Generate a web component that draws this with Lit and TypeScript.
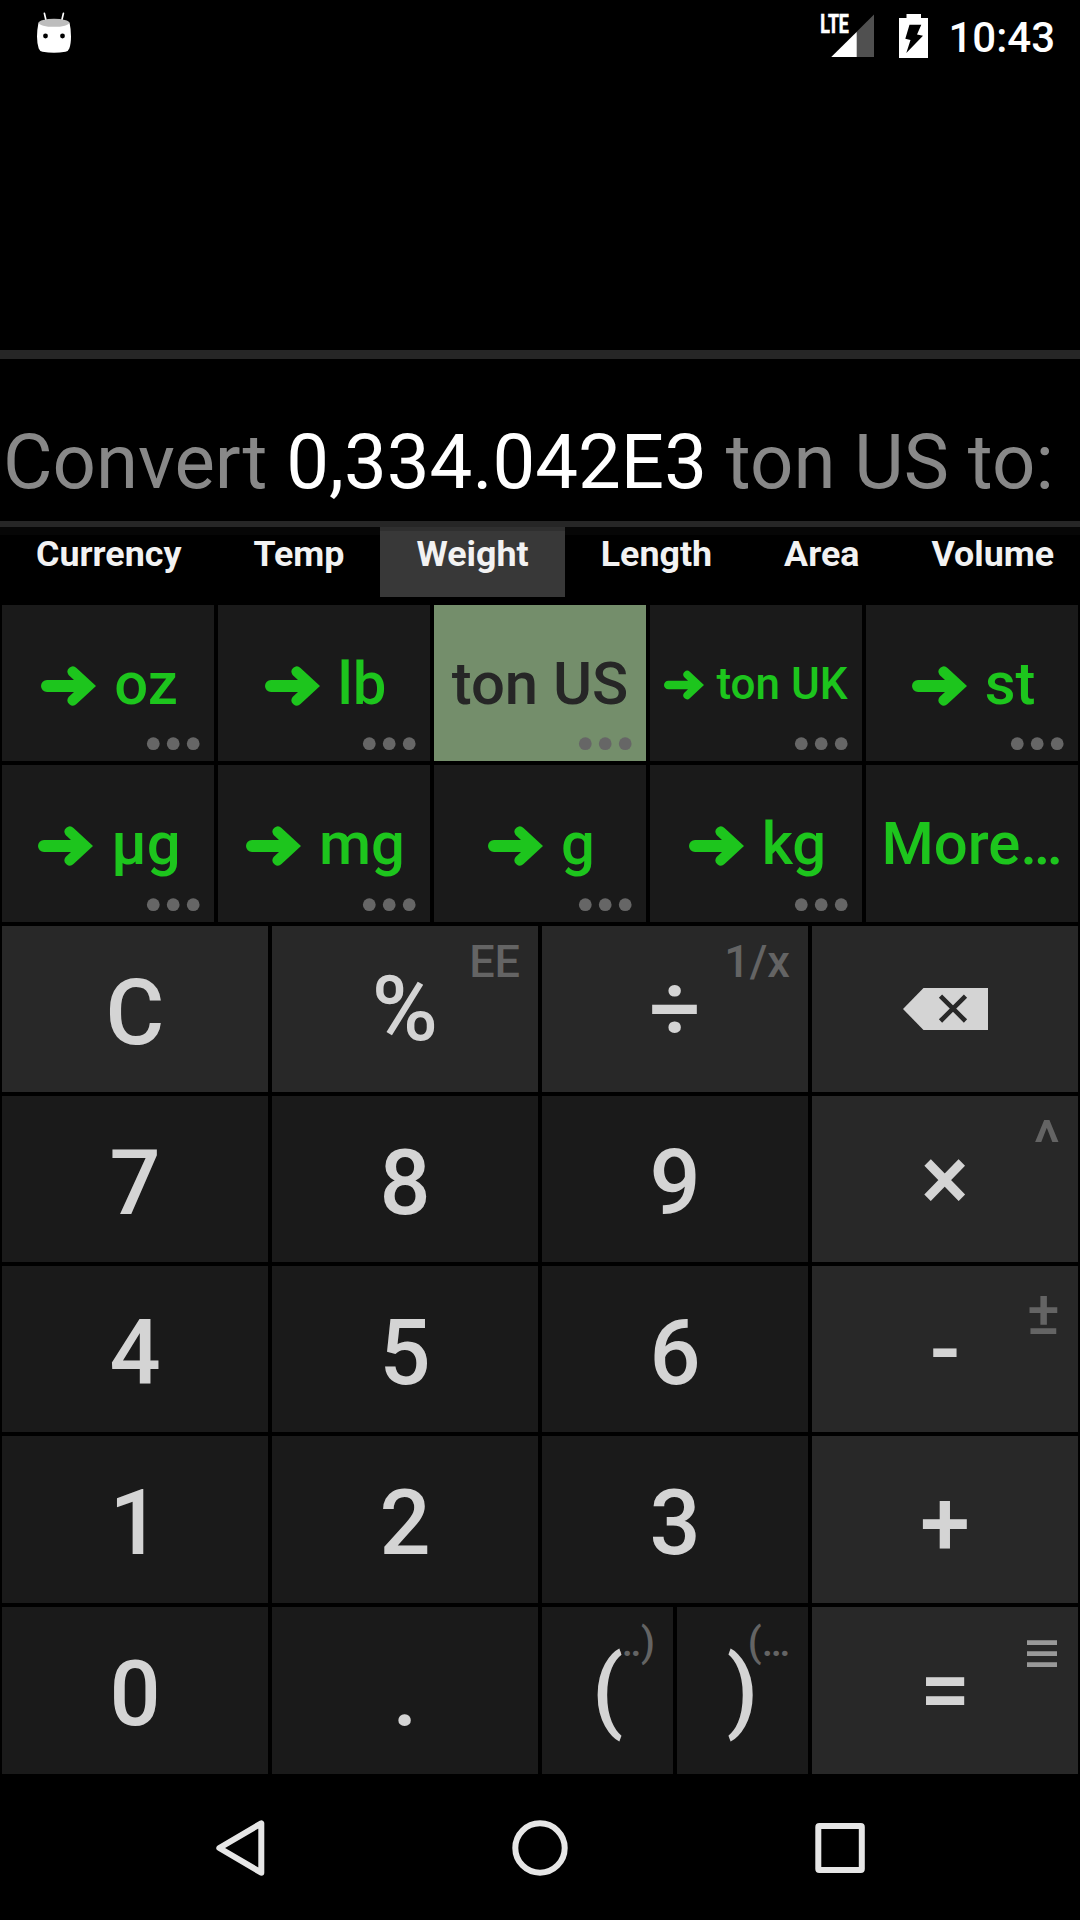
import { LitElement, html, css, nothing, TemplateResult } from "lit";
import { customElement } from "lit/decorators.js";
import { classMap } from "lit/directives/class-map.js";

interface Unit {
  name: string;
  arrow?: boolean;
  small?: boolean;
  selected?: boolean;
  menu?: boolean;
}

interface Key {
  label: string | TemplateResult;
  kind?: string;
  op?: boolean;
  hint?: string | TemplateResult;
  hintKind?: string;
}

const backspaceIcon = html`<svg class="backspace" width="85" height="42" viewBox="0 0 85 42">
  <path fill="#d4d4d4" d="M0 21 20.5 0H85V42H20.5Z" />
  <path stroke="#282828" stroke-width="4.6" d="M37.5 8.2 62.5 33M62.5 8.2 37.5 33" />
</svg>`;

const menuIcon = html`<svg width="30" height="28" viewBox="0 0 30 28">
  <path fill="#999" d="M0 0.3H30V5H0ZM0 11.3H30V16H0ZM0 22.3H30V27H0Z" />
</svg>`;

const UNITS: Unit[] = [
  { name: "oz", arrow: true, menu: true },
  { name: "lb", arrow: true, menu: true },
  { name: "ton US", selected: true, menu: true },
  { name: "ton UK", arrow: true, small: true, menu: true },
  { name: "st", arrow: true, menu: true },
  { name: "µg", arrow: true, menu: true },
  { name: "mg", arrow: true, menu: true },
  { name: "g", arrow: true, menu: true },
  { name: "kg", arrow: true, menu: true },
  { name: "More…" },
];

const KEYS: Key[] = [
  { label: "C", op: true },
  { label: "%", op: true, kind: "raised", hint: "EE" },
  { label: "÷", op: true, kind: "raised", hint: "1/x" },
  { label: backspaceIcon, op: true, kind: "icon" },
  { label: "7" },
  { label: "8" },
  { label: "9" },
  { label: "×", op: true, kind: "raised", hint: "^", hintKind: "large" },
  { label: "4" },
  { label: "5" },
  { label: "6" },
  { label: "-", op: true, kind: "raised", hint: "±", hintKind: "large" },
  { label: "1" },
  { label: "2" },
  { label: "3" },
  { label: "+", op: true, kind: "lowered" },
  { label: "0" },
  { label: "." },
  { label: "(", kind: "raised", hint: "…)", hintKind: "tail" },
  { label: ")", kind: "raised", hint: "(…", hintKind: "tail" },
  { label: "=", op: true, kind: "raised", hint: menuIcon, hintKind: "menu" },
];

@customElement("status-bar")
class StatusBar extends LitElement {
  static styles = css`
    :host {
      display: flex;
      flex: none;
      justify-content: space-between;
      height: 72px;
      color: #fff;
    }
    svg {
      display: block;
    }
    .right {
      display: flex;
      padding-right: 25px;
    }
    .signal {
      margin-right: -2px;
    }
    .time {
      font-size: 42px;
      font-weight: 500;
      line-height: 50px;
      padding-top: 13px;
    }
  `;
  render() {
    return html`
      <svg width="110" height="72" viewBox="0 0 110 72">
        <path stroke="#fff" stroke-width="1.7" stroke-linecap="round" d="M44.4 13.4 46.4 22M63.4 13.4 61.4 22" />
        <path fill="#fff" d="M38.5 22.5H69.5Q71 29 71 36.500T69.300 48.500Q68.500 51 65.500 51.700 54 54 42.500 51.700 39.500 51 38.700 48.500 37 43 37 36.500T38.500 22.500Z" />
        <ellipse cx="54" cy="22.800" rx="15.300" ry="4" fill="#bdbdbd" />
        <circle cx="45.500" cy="36" r="2.400" />
        <circle cx="62.500" cy="36" r="2.400" />
      </svg>
      <div class="right">
        <svg class="signal" width="135" height="72" viewBox="815 0 135 72">
          <path fill="#505050" d="M874 14.500V57H831.300Z" />
          <path fill="#fff" d="M856.700 32V57H831.300Z" />
          <text x="820.300" y="33.300" font-size="25.200" font-weight="700" textLength="28.500" lengthAdjust="spacingAndGlyphs" fill="#fff" stroke="#fff" stroke-width="0.700">LTE</text>
          <path fill="#fff" d="M906.500 14H921V18H928V58H899V18H906.500Z" />
          <path d="M909.500 24.700H921.300L917 34.500 923 35.700 906.300 53 910.500 40 905.300 38.700Z" />
        </svg>
        <div class="time">10:43</div>
      </div>
    `;
  }
}

@customElement("unit-button")
class UnitButton extends LitElement {
  static properties = { unit: { attribute: false } };
  declare unit: Unit;
  static styles = css`
    :host {
      display: block;
    }
    .cell {
      position: relative;
      display: flex;
      align-items: flex-start;
      justify-content: center;
      gap: 18px;
      box-sizing: border-box;
      height: 100%;
      padding-top: 43px;
      background: #1a1a1a;
      color: #1dc51d;
      font-size: 59.8px;
      font-weight: 500;
      line-height: 72px;
      white-space: nowrap;
    }
    .selected {
      background: #748e6b;
      color: #262626;
    }
    .linked {
      padding-left: 3px;
    }
    .arrow {
      display: block;
      width: 55px;
      height: 40px;
      margin-top: 18px;
    }
    .small {
      font-size: 44px;
      gap: 12px;
      padding-left: 0;
    }
    .small .arrow {
      width: 40px;
      height: 30px;
      margin-top: 22px;
    }
    .dots {
      position: absolute;
      right: 14px;
      bottom: 10px;
    }
  `;
  render() {
    const u = this.unit;
    return html`<div class=${classMap({ cell: true, linked: !!u.arrow, selected: !!u.selected, small: !!u.small })}>
      ${u.arrow
        ? html`<svg class="arrow" viewBox="0 0 55 40">
            <path fill="currentColor" d="M6 14H33L27.600 8.900A5.300 5.300 0 0 1 35.500 1.900L55 20 35.500 38.100A5.300 5.300 0 0 1 27.600 31.100L33 26H6A6 6 0 0 1 6 14Z" />
          </svg>`
        : nothing}
      <span>${u.name}</span>
      ${u.menu
        ? html`<svg class="dots" width="54" height="14" viewBox="0 0 54 14" fill="#666">
            <circle cx="7.300" cy="6.700" r="6.400" /><circle cx="27.200" cy="6.700" r="6.400" /><circle cx="47.200" cy="6.700" r="6.400" />
          </svg>`
        : nothing}
    </div>`;
  }
}

@customElement("calc-key")
class CalcKey extends LitElement {
  static properties = { key: { attribute: false } };
  declare key: Key;
  static styles = css`
    :host {
      display: block;
    }
    .key {
      position: relative;
      display: flex;
      justify-content: center;
      box-sizing: border-box;
      height: 100%;
      padding-top: 38px;
      background: #1a1a1a;
      color: #d4d4d4;
      font-size: 90px;
      font-weight: 500;
      line-height: 100px;
    }
    .op {
      background: #282828;
    }
    .raised {
      padding-top: 34px;
    }
    .lowered {
      padding-top: 39px;
    }
    .icon {
      padding-top: 62px;
    }
    .label {
      position: relative;
      z-index: 1;
    }
    .label svg,
    .hint svg {
      display: block;
    }
    .hint {
      position: absolute;
      top: 10px;
      right: 18px;
      color: #646464;
      font-size: 45px;
      line-height: 52px;
    }
    .large {
      top: 21px;
      font-size: 62px;
    }
    .menu {
      top: 33px;
      right: 21px;
    }
    .tail {
      font-size: 40px;
    }
  `;
  render() {
    const k = this.key;
    return html`<div class="key ${k.op ? "op" : ""} ${k.kind ?? ""}">
      <span class="label">${k.label}</span>
      ${k.hint ? html`<span class="hint ${k.hintKind ?? ""}">${k.hint}</span>` : nothing}
    </div>`;
  }
}

@customElement("app-root")
class AppRoot extends LitElement {
  static styles = css`
    :host {
      display: flex;
      flex-direction: column;
      width: 1080px;
      height: 1920px;
      overflow: hidden;
      background: #000;
      font-family: Roboto, sans-serif;
    }
    .history {
      flex: none;
      height: 278px;
      border-bottom: 9px solid #262626;
    }
    .display {
      flex: none;
      box-sizing: border-box;
      height: 168px;
      padding: 58px 0 0 3px;
      border-bottom: 6px solid #262626;
      color: #888;
      font-size: 76.15px;
      line-height: 90px;
      white-space: nowrap;
    }
    .value {
      color: #fff;
    }
    .tabs {
      display: flex;
      flex: none;
      height: 70px;
      overflow: hidden;
      background: linear-gradient(#060606 8px, #000 8px);
      color: #f2f2f2;
      font-size: 35.8px;
      font-weight: 700;
      line-height: 54px;
    }
    .tab {
      flex: none;
      padding: 0 36px;
    }
    .active {
      background: linear-gradient(#2f2f2f 4px, #383838 4px);
    }
    .units {
      display: grid;
      flex: none;
      grid-template-columns: repeat(5, 212px);
      grid-template-rows: 156px 157px;
      gap: 4px;
      padding: 8px 2px 4px;
    }
    .keys {
      display: grid;
      flex: none;
      grid-template-columns: repeat(2, 266px) 131px 131px 266px;
      grid-template-rows: 166px 166px 166px 167px 167px;
      gap: 4px;
      padding: 0 2px;
    }
    .wide {
      grid-column: span 2;
    }
    .nav {
      display: flex;
      flex: 1;
      align-items: center;
      justify-content: space-between;
      padding: 2px 212px 0;
    }
    .nav svg {
      display: block;
    }
  `;
  render() {
    const tabs = ["Currency", "Temp", "Weight", "Length", "Area", "Volume"];
    return html`
      <status-bar></status-bar>
      <div class="history"></div>
      <div class="display">Convert <span class="value">0,334.042E3</span> ton US to:</div>
      <div class="tabs">
        ${tabs.map((t) => html`<div class=${classMap({ tab: true, active: t === "Weight" })}>${t}</div>`)}
      </div>
      <div class="units">${UNITS.map((u) => html`<unit-button .unit=${u}></unit-button>`)}</div>
      <div class="keys">
        ${KEYS.map((k, i) => html`<calc-key class=${i < 16 && i % 4 === 2 ? "wide" : ""} .key=${k}></calc-key>`)}
      </div>
      <div class="nav">
        <svg width="56" height="60" viewBox="212 1818 56 60" fill="none" stroke="#e6e6e6" stroke-width="6" stroke-linejoin="round">
          <path d="M219.300 1848 261.300 1823.300V1872.700Z" />
        </svg>
        <svg width="60" height="60" viewBox="510 1818 60 60" fill="none" stroke="#e6e6e6" stroke-width="6">
          <circle cx="540" cy="1848" r="24.700" />
        </svg>
        <svg width="56" height="60" viewBox="812 1818 56 60" fill="none" stroke="#e6e6e6" stroke-width="6" stroke-linejoin="round">
          <rect x="818.300" y="1826" width="43.500" height="44" rx="1" />
        </svg>
      </div>
    `;
  }
}
